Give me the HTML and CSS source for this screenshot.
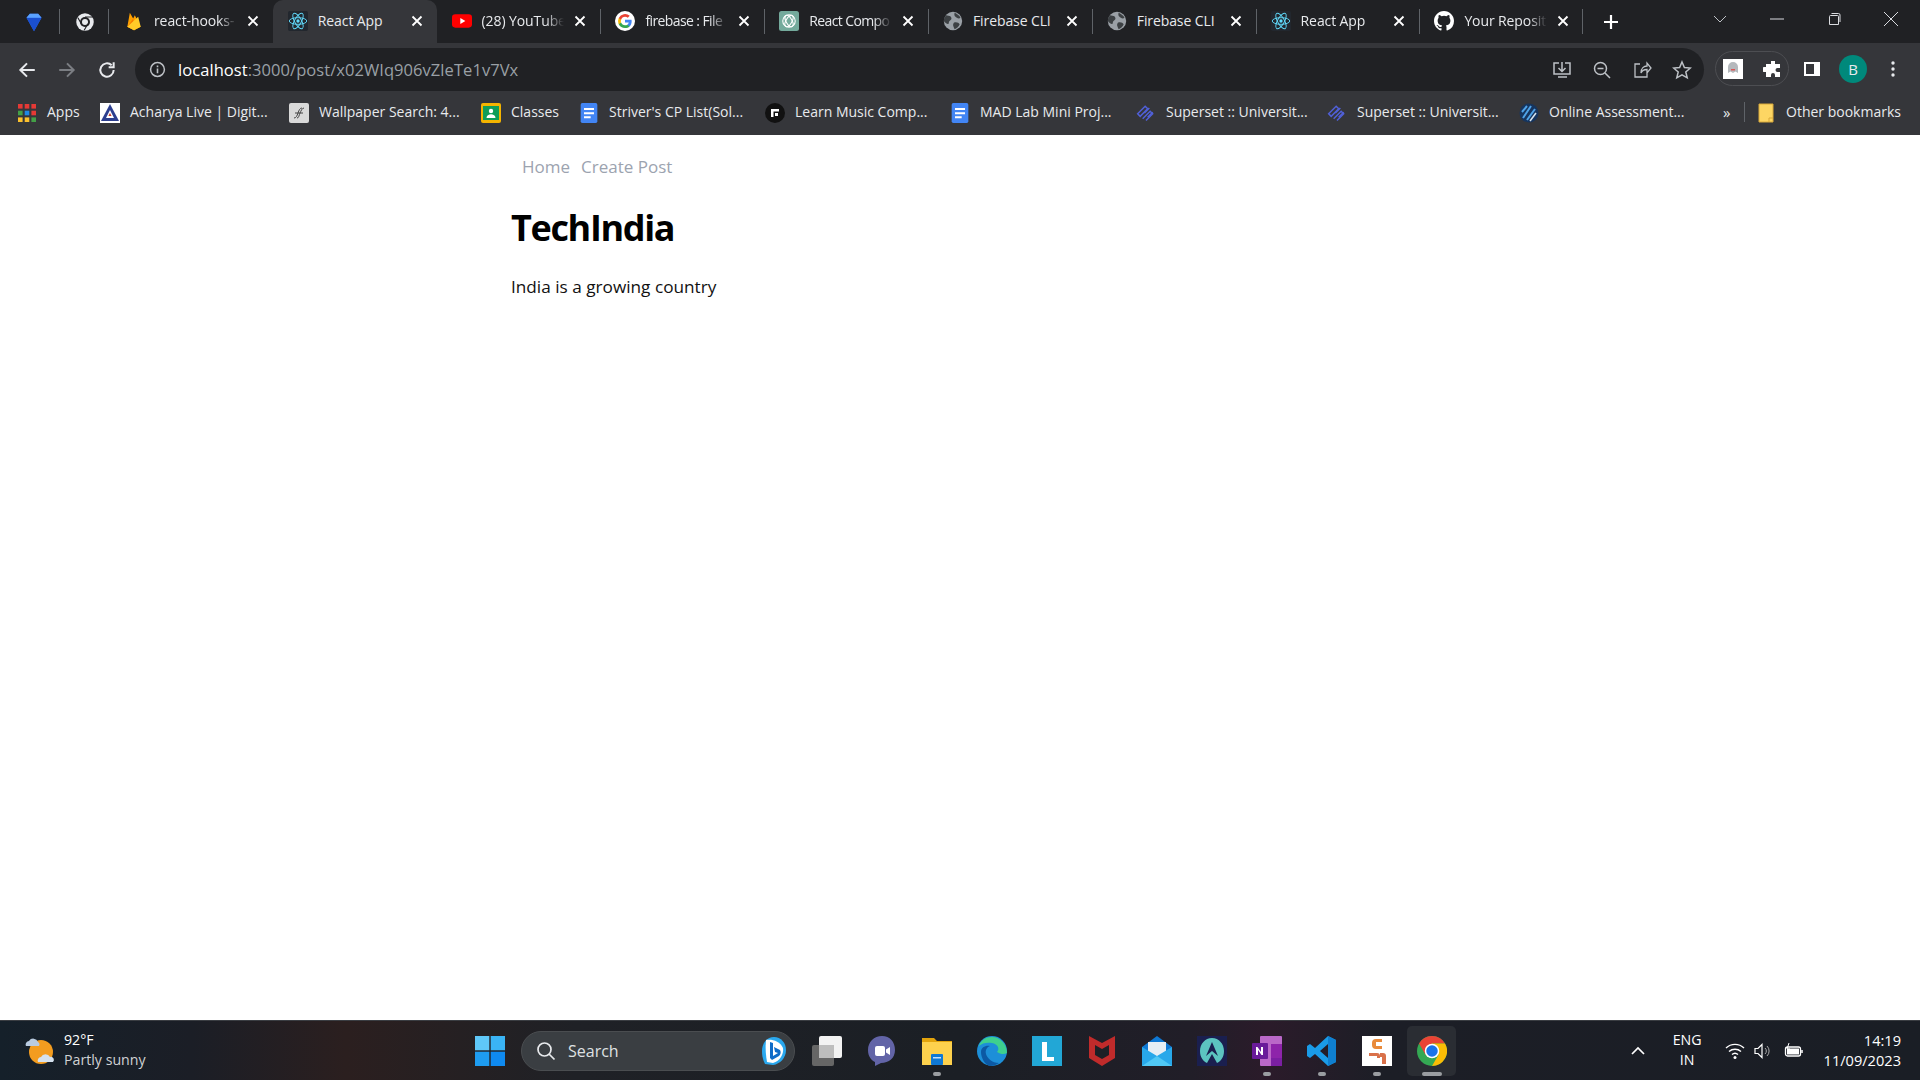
FILE: index.html
```html
<!DOCTYPE html>
<html lang="en">
<head>
<meta charset="utf-8">
<title>React App</title>
<link rel="stylesheet" href="styles.css">
</head>
<body>
<svg class="defs" width="0" height="0" aria-hidden="true">
  <symbol id="react" viewBox="0 0 24 24"><rect width="24" height="24" rx="2" fill="#22272e"/><g fill="none" stroke="#61dafb" stroke-width="1.1"><ellipse cx="12" cy="12" rx="10.5" ry="4"/><ellipse cx="12" cy="12" rx="10.5" ry="4" transform="rotate(60 12 12)"/><ellipse cx="12" cy="12" rx="10.5" ry="4" transform="rotate(120 12 12)"/></g><circle cx="12" cy="12" r="2" fill="#61dafb"/></symbol>
  <symbol id="globe" viewBox="0 0 24 24"><circle cx="12" cy="12" r="11" fill="#9aa0a6"/><path d="M4 5c3 1 5 0 6 3s-3 3-3 6-4 1-6-2c0-3 1-5 3-7zM14 2c2 1 6 3 7 6-2 2-5 0-6-1s-2-3-1-5zM13 14c3-1 6 0 7 2-1 3-4 5-6 6-1-3-3-5-1-8z" fill="#3c4043"/></symbol>
  <symbol id="doc" viewBox="0 0 20 24"><rect width="20" height="24" rx="2" fill="#4285f4"/><path d="M4 6h12v2.4H4zM4 11h12v2.4H4zM4 16h8v2.4H4z" fill="#fff"/></symbol>
  <symbol id="superset" viewBox="0 0 24 24"><g fill="none" stroke="#5060d8" stroke-width="1.8"><path d="M2 13 11 4l3 3-9 9zM8 19l9-9 3 3-8 8"/><path d="M10 12l6-6M14 17l6-6"/></g></symbol>
  <symbol id="close" viewBox="0 0 12 12"><path d="M1.5 1.5l9 9M10.5 1.5l-9 9" stroke="#fff" stroke-width="1.8" fill="none"/></symbol>
</svg>

<header class="chrome">
  <div class="tabstrip">
    <div class="pinned">
      <svg class="fav" viewBox="0 0 24 24"><path d="M3 7l4-5h10l4 5-9 16z" fill="#2a6ae8"/><path d="M3 7h18l-9 16z" fill="#1a4fd0"/><path d="M7 2h10l4 5H3z" fill="#5aa2ff"/></svg>
    </div>
    <div class="pinned">
      <svg class="fav" viewBox="0 0 24 24"><circle cx="12" cy="12" r="10.5" fill="#e8eaed"/><circle cx="12" cy="12" r="6" fill="#202124"/><circle cx="12" cy="12" r="3.6" fill="#e8eaed"/><path d="M12 6h9M8 15 3.500 7M15.500 14 11 22" stroke="#202124" stroke-width="1.300"/></svg>
    </div>
    <div class="tab">
      <svg class="fav" viewBox="0 0 24 24"><path d="M4 19 7 2l4 7 2-4 7 14-8 4z" fill="#ffa000"/><path d="M4 19 11 9l2 14z" fill="#f57c00"/><path d="M4 19 17 7l3 12-8 4z" fill="#ffca28"/></svg>
      <span class="title">react-hooks-</span>
      <svg class="x"><use href="#close"/></svg>
    </div>
    <div class="tab active">
      <svg class="fav"><use href="#react"/></svg>
      <span class="title">React App</span>
      <svg class="x"><use href="#close"/></svg>
    </div>
    <div class="tab">
      <svg class="fav" viewBox="0 0 24 24"><rect y="4" width="24" height="16" rx="4" fill="#f00"/><path d="M10 8.500v7l6-3.500z" fill="#fff"/></svg>
      <span class="title">(28) YouTube</span>
      <svg class="x"><use href="#close"/></svg>
    </div>
    <div class="tab sep">
      <svg class="fav" viewBox="0 0 24 24"><circle cx="12" cy="12" r="12" fill="#fff"/><path d="M20 12.300c0-.6-.1-1.200-.2-1.800H12v3.400h4.500a3.900 3.900 0 0 1-1.700 2.500v2.100h2.700c1.600-1.500 2.500-3.600 2.500-6.200z" fill="#4285f4"/><path d="M12 20.500c2.300 0 4.200-.8 5.500-2l-2.700-2.100c-.7.500-1.700.8-2.800.8-2.200 0-4-1.500-4.700-3.400H4.500v2.100a8.500 8.500 0 0 0 7.500 4.600z" fill="#34a853"/><path d="M7.300 13.800a5 5 0 0 1 0-3.300V8.400H4.500a8.500 8.500 0 0 0 0 7.500z" fill="#fbbc05"/><path d="M12 6.900c1.300 0 2.400.4 3.300 1.300l2.400-2.400A8.500 8.500 0 0 0 4.500 8.400l2.800 2.100C8 8.500 9.800 6.900 12 6.900z" fill="#ea4335"/></svg>
      <span class="title tight">firebase : File</span>
      <svg class="x"><use href="#close"/></svg>
    </div>
    <div class="tab sep">
      <svg class="fav" viewBox="0 0 24 24"><rect width="24" height="24" rx="3" fill="#74aa9c"/><g fill="none" stroke="#fff" stroke-width="1.300"><circle cx="12" cy="12" r="7.500"/><ellipse cx="12" cy="12" rx="7.500" ry="3.500" transform="rotate(60 12 12)"/><ellipse cx="12" cy="12" rx="7.500" ry="3.500" transform="rotate(120 12 12)"/></g></svg>
      <span class="title tight">React Compo</span>
      <svg class="x"><use href="#close"/></svg>
    </div>
    <div class="tab sep">
      <svg class="fav"><use href="#globe"/></svg>
      <span class="title short">Firebase CLI</span>
      <svg class="x"><use href="#close"/></svg>
    </div>
    <div class="tab sep">
      <svg class="fav"><use href="#globe"/></svg>
      <span class="title short">Firebase CLI</span>
      <svg class="x"><use href="#close"/></svg>
    </div>
    <div class="tab sep">
      <svg class="fav"><use href="#react"/></svg>
      <span class="title">React App</span>
      <svg class="x"><use href="#close"/></svg>
    </div>
    <div class="tab sep last">
      <svg class="fav" viewBox="0 0 16 16"><path fill="#fff" d="M8 0C3.580 0 0 3.580 0 8c0 3.540 2.290 6.530 5.470 7.590.4.070.55-.17.550-.38 0-.19-.01-.82-.01-1.490-2.010.37-2.530-.49-2.690-.94-.09-.23-.48-.94-.82-1.130-.28-.15-.68-.52-.01-.53.630-.01 1.080.58 1.230.82.720 1.210 1.870.87 2.330.66.070-.52.280-.87.510-1.070-1.780-.2-3.640-.89-3.640-3.950 0-.87.310-1.590.820-2.150-.08-.2-.36-1.020.08-2.120 0 0 .67-.21 2.200.82a7.420 7.420 0 0 1 4 0c1.530-1.040 2.200-.82 2.200-.82.440 1.100.16 1.920.08 2.120.51.560.82 1.270.82 2.150 0 3.070-1.870 3.750-3.650 3.950.29.250.54.730.54 1.480 0 1.070-.01 1.930-.01 2.200 0 .21.150.46.550.38A8.010 8.010 0 0 0 16 8c0-4.420-3.580-8-8-8z"/></svg>
      <span class="title">Your Reposit</span>
      <svg class="x"><use href="#close"/></svg>
    </div>
    <svg class="plus" viewBox="0 0 16 16"><path d="M8 1v14M1 8h14" stroke="#fff" stroke-width="2.200"/></svg>
    <div class="winctl">
      <svg class="wc" viewBox="0 0 14 14"><path d="M1 4l6 6 6-6" stroke="#bdc1c6" fill="none"/></svg>
      <svg class="wc" viewBox="0 0 14 14"><path d="M0 7h14" stroke="#dadce0"/></svg>
      <svg class="wc" viewBox="0 0 14 14"><path d="M3.500 3.500h7a1 1 0 0 1 1 1v8h-9v-8a1 1 0 0 1 1-1zM4.500 1.500h7a1.500 1.500 0 0 1 1.500 1.500v7" stroke="#dadce0" fill="none"/></svg>
      <svg class="wc" viewBox="0 0 14 14"><path d="M0 0l14 14M14 0 0 14" stroke="#dadce0"/></svg>
    </div>
  </div>

  <div class="toolbar">
    <div class="nav-btns">
      <svg class="tb" viewBox="0 0 18 18"><path d="M16 9H3M9 3 3 9l6 6" stroke="#e8eaed" stroke-width="1.800" fill="none"/></svg>
      <svg class="tb" viewBox="0 0 18 18"><path d="M2 9h13M9 3l6 6-6 6" stroke="#7b7e83" stroke-width="1.800" fill="none"/></svg>
      <svg class="tb" viewBox="0 0 18 18"><path d="M15 9a6 6 0 1 1-1.800-4.300M15 2v4.500h-4.500" stroke="#e8eaed" stroke-width="1.800" fill="none"/></svg>
    </div>
    <div class="omnibox">
      <svg class="info" viewBox="0 0 16 16"><circle cx="8" cy="8" r="6.500" fill="none" stroke="#bdc1c6" stroke-width="1.400"/><path d="M8 7v4.500M8 4.300v1.500" stroke="#bdc1c6" stroke-width="1.500"/></svg>
      <span class="url"><span class="host">localhost</span>:3000/post/x02WIq906vZleTe1v7Vx</span>
      <div class="omni-actions">
        <svg class="tb" viewBox="0 0 20 20"><path d="M7 3H2v11h16V3h-5M10 2v9M6.500 8l3.500 3.500L13.500 8M6 17h9" stroke="#bdc1c6" stroke-width="1.500" fill="none"/></svg>
        <svg class="tb" viewBox="0 0 20 20"><circle cx="8.500" cy="8.500" r="6" stroke="#bdc1c6" stroke-width="1.500" fill="none"/><path d="M13 13l5 5M5.500 8.500h6" stroke="#bdc1c6" stroke-width="1.500"/></svg>
        <svg class="tb" viewBox="0 0 20 20"><path d="M8 4H3v13h12v-4M9 13c0-5 3-7 6-7V3l4 5-4 5V9.500c-3 0-5 1-6 3.500z" stroke="#bdc1c6" stroke-width="1.300" fill="none"/></svg>
        <svg class="tb" viewBox="0 0 20 20"><path d="M10 2l2.400 5.500 6 .5-4.600 4 1.400 5.800L10 14.800l-5.200 3 1.400-5.800L1.600 8l6-.5z" stroke="#bdc1c6" stroke-width="1.500" fill="none"/></svg>
      </div>
    </div>
    <div class="ext-pill">
      <svg class="ext-ghost" viewBox="0 0 20 20"><rect width="20" height="20" fill="#fff"/><path d="M5 14V8a5 5 0 0 1 10 0v6l-2.500-1.500L10 14l-2.500-1.500z" fill="#b5b9bd"/><rect x="8" y="10" width="4" height="1.500" fill="#d55"/></svg>
      <svg class="tb" viewBox="0 0 20 20"><path d="M8 2h4v3h5v4h-2.500a2 2 0 0 0 0 4H17v5h-5v-2a2 2 0 0 0-4 0v2H3v-5H1.500a2.500 2.500 0 0 1 0-5H3V5h5z" fill="#fff"/></svg>
    </div>
    <svg class="tb panel" viewBox="0 0 20 20"><path d="M2 3h16v14H2zM4 5v10h8V5z" fill="#fff" fill-rule="evenodd"/></svg>
    <div class="avatar">B</div>
    <svg class="tb menu" viewBox="0 0 20 20"><circle cx="10" cy="4" r="1.700" fill="#e8eaed"/><circle cx="10" cy="10" r="1.700" fill="#e8eaed"/><circle cx="10" cy="16" r="1.700" fill="#e8eaed"/></svg>
  </div>

  <nav class="bookmarks">
    <div class="bm">
      <svg class="fav" viewBox="0 0 20 20"><g fill="#e53935"><rect x="1" y="1" width="4.600" height="4.600"/><rect x="7.700" y="1" width="4.600" height="4.600"/><rect x="14.400" y="1" width="4.600" height="4.600"/></g><rect x="1" y="7.700" width="4.600" height="4.600" fill="#43a047"/><rect x="7.700" y="7.700" width="4.600" height="4.600" fill="#1e88e5"/><rect x="14.400" y="7.700" width="4.600" height="4.600" fill="#e53935"/><g fill="#fbc02d"><rect x="1" y="14.400" width="4.600" height="4.600"/><rect x="7.700" y="14.400" width="4.600" height="4.600"/></g><rect x="14.400" y="14.400" width="4.600" height="4.600" fill="#43a047"/></svg>
      <span>Apps</span>
    </div>
    <div class="bm">
      <svg class="fav" viewBox="0 0 20 20"><rect width="20" height="20" fill="#fff"/><path d="M10 1 1 18h18z" fill="#2c3e8f"/><path d="M10 7 6 15h8z" fill="#fff"/><path d="M10 10l-1.600 3h3.200z" fill="#c0392b"/></svg>
      <span>Acharya Live | Digit...</span>
    </div>
    <div class="bm">
      <svg class="fav" viewBox="0 0 20 20"><rect width="20" height="20" rx="2" fill="#d9d9d9"/><path d="M5 15c2 0 3-2 4-5s2-5 4-5M8 15c2 0 2-3 3-5s2-5 4-5M6 10h8" stroke="#444" fill="none"/></svg>
      <span>Wallpaper Search: 4...</span>
    </div>
    <div class="bm">
      <svg class="fav" viewBox="0 0 20 20"><rect width="20" height="20" rx="2" fill="#f4b400"/><rect x="2" y="3" width="16" height="14" fill="#0f9d58"/><circle cx="10" cy="8" r="2.200" fill="#fff"/><path d="M5.500 15c0-5 9-5 9 0z" fill="#fff"/></svg>
      <span>Classes</span>
    </div>
    <div class="bm"><svg class="fav"><use href="#doc"/></svg><span>Striver's CP List(Sol...</span></div>
    <div class="bm">
      <svg class="fav" viewBox="0 0 20 20"><circle cx="10" cy="10" r="10" fill="#111"/><path d="M6 6h8v2.500H8.500V14H6zM10 10h3v3h-3z" fill="#fff"/></svg>
      <span>Learn Music Comp...</span>
    </div>
    <div class="bm"><svg class="fav"><use href="#doc"/></svg><span>MAD Lab Mini Proj...</span></div>
    <div class="bm"><svg class="fav"><use href="#superset"/></svg><span>Superset :: Universit...</span></div>
    <div class="bm"><svg class="fav"><use href="#superset"/></svg><span>Superset :: Universit...</span></div>
    <div class="bm">
      <svg class="fav" viewBox="0 0 20 20"><circle cx="10" cy="10" r="9.500" fill="#16355f"/><path d="M4 15 12 3M8 17l8-11M3 9l5-6" stroke="#4fa3e8" stroke-width="2"/><path d="M11 18l6-8" stroke="#d8e4ef" stroke-width="1.500"/></svg>
      <span>Online Assessment...</span>
    </div>
    <span class="more">»</span>
    <div class="bm other">
      <svg class="folder" viewBox="0 0 16 20"><path d="M1 1h14v18H1z" fill="#fdd663" stroke="#d9a93a"/><path d="M11 19v-4h4" fill="none" stroke="#d9a93a"/></svg>
      <span>Other bookmarks</span>
    </div>
  </nav>
</header>

<main class="page">
  <div class="container">
    <ul class="site-nav">
      <li><a href="#">Home</a></li>
      <li><a href="#">Create Post</a></li>
    </ul>
    <h1>TechIndia</h1>
    <p>India is a growing country</p>
  </div>
</main>

<footer class="taskbar">
  <div class="weather">
    <svg class="w-icon" viewBox="0 0 32 32"><circle cx="17" cy="17" r="12" fill="#f39c1f"/><path d="M2 11a3.500 3.500 0 0 1 3-5 5 5 0 0 1 9 1 3 3 0 0 1 1 4z" fill="#b9cbe0"/><path d="M14 27a3.500 3.500 0 0 1 3-5 5 5 0 0 1 9 0 3 3 0 0 1 3 5z" fill="#d5e1ee"/></svg>
    <div class="w-text"><span>92°F</span><span class="dim">Partly sunny</span></div>
  </div>
  <div class="slot">
    <svg class="win" viewBox="0 0 30 30"><rect width="14.300" height="14.300" fill="#5fc8f8"/><rect x="15.700" width="14.300" height="14.300" fill="#3ab4f5"/><rect y="15.700" width="14.300" height="14.300" fill="#1e9cf0"/><rect x="15.700" y="15.700" width="14.300" height="14.300" fill="#0f8af0"/></svg>
  </div>
  <div class="search">
    <svg class="s-icon" viewBox="0 0 20 20"><circle cx="8.500" cy="8.500" r="6.500" fill="none" stroke="#e8eaed" stroke-width="1.700"/><path d="M13 13l5.500 5.500" stroke="#e8eaed" stroke-width="1.700"/></svg>
    <span>Search</span>
    <svg class="bing" viewBox="0 0 26 30"><path d="M13 1c7 0 12 6 12 13 0 8-6 14-13 15l-8-1c-2-4-3-8-3-13C1 7 6 1 13 1z" fill="#2aa8ee"/><path d="M5 4c6-1 14 1 17 8 1 6-3 13-10 15l-6-1c-1-6-2-14-1-22z" fill="#fff"/><path d="M9 6l3 1v13l5-3-3-1-1-5 6 3c1 2 1 4-1 6l-7 4-2-2z" fill="#0f6cc8"/></svg>
  </div>
  <div class="apps">
    <div class="slot"><svg class="app" viewBox="0 0 30 30"><rect y="9" width="22" height="21" rx="2" fill="#666"/><rect x="7" width="23" height="22" rx="2" fill="#f2f2f2"/><rect x="7" y="9" width="15" height="13" fill="#bdbdbd"/></svg></div>
    <div class="slot"><svg class="app" viewBox="0 0 30 30"><path d="M15 0c8 0 13 6 13 14s-6 13-14 13l-6 3v-4C4 24 1 20 1 14 1 6 7 0 15 0z" fill="#6264a7"/><rect x="8" y="10" width="10" height="10" rx="2" fill="#fff"/><path d="M19 13.500l4-2.500v8l-4-2.500z" fill="#fff"/></svg></div>
    <div class="slot">
      <svg class="app" viewBox="0 0 30 30"><path d="M0 2h12l3 3h15v24H0z" fill="#e3a40c"/><rect y="6" width="30" height="23" fill="#fdd14d"/><rect x="9" y="18" width="12" height="11" rx="1" fill="#0f78d4"/><rect x="11" y="21" width="8" height="1.500" fill="#bfe0ff"/></svg>
      <i class="dot"></i>
    </div>
    <div class="slot"><svg class="app" viewBox="0 0 30 30"><circle cx="15" cy="15" r="15" fill="#1d8fd8"/><path d="M30 17c0-9-7-16-15-16S3 6 2 10c3-3 8-4 13-3 6 1 8 6 5 9 3 2 7 3 10 1z" fill="#3ed08e"/><path d="M4 16c0-5 5-7 9-6-3 1-5 4-4 8s6 9 13 9c-3 2-6 3-9 3-5-1-9-8-9-14z" fill="#0c59a4"/></svg></div>
    <div class="slot"><svg class="app" viewBox="0 0 30 30"><rect width="30" height="30" fill="#22a7d6"/><path d="M10 6h5v15h7v4H10z" fill="#fff"/></svg></div>
    <div class="slot"><svg class="app" viewBox="0 0 30 30"><path d="M2 0l13 7 13-7v22L15 30 2 22z" fill="#c02b2b"/><path d="M8 9l7 4 7-4v10l-7 4-7-4z" fill="#1d2026"/></svg></div>
    <div class="slot"><svg class="app" viewBox="0 0 30 30"><path d="M0 11 15 0l15 11v19H0z" fill="#0f78d4"/><path d="M6 6h18v10l-9 5-9-5z" fill="#e6eef5"/><path d="M0 11l15 9 15-9v19H0z" fill="#28a8ea"/><path d="M0 30l15-10 15 10z" fill="#50c8f5"/></svg></div>
    <div class="slot"><svg class="app" viewBox="0 0 30 30"><rect width="30" height="30" fill="#1a1f4f"/><path d="M15 2C8 2 3 8 3 15c0 6 3 10 7 12l5-9 5 9c4-2 7-6 7-12 0-7-5-13-12-13z" fill="#5cc4c0"/><path d="M15 6l-6 14 6-5 6 5z" fill="#1a1f4f"/></svg></div>
    <div class="slot">
      <svg class="app" viewBox="0 0 30 30"><rect x="8" width="22" height="30" rx="1" fill="#ba68c8"/><rect x="19" y="8" width="11" height="14" fill="#8e24aa"/><rect x="19" y="22" width="11" height="8" fill="#7b1fa2"/><rect y="7" width="16" height="16" rx="1" fill="#6a1b9a"/><path d="M4 19v-8h1.500l3.500 5v-5h2v8H9.500L6 14v5z" fill="#fff"/></svg>
      <i class="dot"></i>
    </div>
    <div class="slot">
      <svg class="app" viewBox="0 0 30 30"><path d="M21 0l8 4v22l-8 4L8 18l-5 4-3-2v-10l3-2 5 4zM21 8l-8 7 8 7z" fill="#1a9be8"/><path d="M21 0l8 4v22l-8 4z" fill="#0f7fd0"/></svg>
      <i class="dot"></i>
    </div>
    <div class="slot">
      <svg class="app" viewBox="0 0 30 30"><rect width="30" height="30" fill="#fff"/><path d="M20 3h-6a4 4 0 0 0-4 4v2a4 4 0 0 0 4 4h6v-3h-6V6h6z" fill="#e98a3a"/><path d="M7 17h8a3 3 0 0 1 3 3v2h-3v-2H7zM18 17h3a3 3 0 0 1 3 3v8h-4v-7h-2z" fill="#d9714a"/></svg>
      <i class="dot"></i>
    </div>
    <div class="slot current">
      <svg class="app" viewBox="0 0 24 24"><circle cx="12" cy="12" r="12" fill="#34a853"/><path d="M12 0a12 12 0 0 0-10.400 6l5.200 9L12 6h10.400A12 12 0 0 0 12 0z" fill="#ea4335"/><path d="M22.400 6H12l5.200 9L12 24a12 12 0 0 0 10.400-18z" fill="#fbbc05"/><circle cx="12" cy="12" r="5.800" fill="#fff"/><circle cx="12" cy="12" r="4.600" fill="#1a73e8"/></svg>
      <i class="dot wide"></i>
    </div>
  </div>
  <div class="tray">
    <svg class="chev" viewBox="0 0 14 10"><path d="M1 8l6-6 6 6" stroke="#fff" stroke-width="1.700" fill="none"/></svg>
    <div class="lang"><span>ENG</span><span>IN</span></div>
    <svg class="tray-i" viewBox="0 0 20 20"><path d="M1 7a13 13 0 0 1 18 0M4 10.500a9 9 0 0 1 12 0M7 13.500a4.500 4.500 0 0 1 6 0" stroke="#fff" stroke-width="1.400" fill="none"/><circle cx="10" cy="16.500" r="1.500" fill="#fff"/></svg>
    <svg class="tray-i" viewBox="0 0 20 20"><path d="M2 7.500h3l4-4v13l-4-4H2z" stroke="#fff" stroke-width="1.200" fill="none"/><path d="M12 7a4 4 0 0 1 0 6M14 5a7 7 0 0 1 0 10" stroke="#aaa" fill="none"/></svg>
    <svg class="tray-i batt" viewBox="0 0 20 20"><rect x="1.500" y="6" width="15" height="9" rx="2" stroke="#fff" stroke-width="1.300" fill="none"/><rect x="3" y="7.500" width="12" height="6" fill="#fff"/><path d="M18 9v3" stroke="#fff" stroke-width="1.500"/><path d="M5 2 3 8h3l-1 4" stroke="#fff" fill="none"/></svg>
    <div class="clock"><span>14:19</span><span>11/09/2023</span></div>
  </div>
</footer>
</body>
</html>
```
FILE: styles.css
```css
* { box-sizing: border-box; }
html, body { margin: 0; height: 100%; }
body {
  display: flex;
  flex-direction: column;
  width: 1920px;
  height: 1080px;
  overflow: hidden;
  font-family: "Open Sans", "Noto Sans", sans-serif;
  background: #fff;
}
.defs { position: absolute; }
svg { display: block; flex: none; }

/* Tab strip */
.chrome { flex: none; color: #e8eaed; }
.tabstrip {
  display: flex;
  align-items: stretch;
  height: 43px;
  background: #202124;
}
.pinned {
  width: 49px;
  display: flex;
  align-items: center;
  justify-content: center;
  position: relative;
}
.pinned::after, .tab.sep::before, .tab.last::after {
  content: "";
  position: absolute;
  top: 9px;
  height: 25px;
  width: 1px;
  background: #5f6368;
}
.pinned::after { right: 0; }
.pinned:first-child { width: 60px; padding-left: 8px; }
.tab {
  position: relative;
  width: 163.8px;
  display: flex;
  align-items: center;
  padding: 0 14px 3px 15px;
  gap: 10px;
  font-size: 14px;
  letter-spacing: -.1px;
}
.tab.sep::before { left: 0; }
.tab.last::after { right: 0; }
.tab.active {
  background: #35363a;
  border-radius: 10px 10px 0 0;
}
.fav { width: 20px; height: 20px; }
.tab .fav, .tab .x { margin-top: 2px; }
.title {
  flex: 1;
  min-width: 0;
  white-space: nowrap;
  overflow: hidden;
  -webkit-mask-image: linear-gradient(to right, #000 78%, transparent 100%);
  mask-image: linear-gradient(to right, #000 78%, transparent 100%);
}
.title.tight { letter-spacing: -.6px; }
.active .title, .title.short { -webkit-mask-image: none; mask-image: none; }
.x { width: 12px; height: 12px; }
.plus { width: 16px; height: 16px; align-self: center; margin-left: 20px; }
.winctl {
  margin-left: auto;
  display: flex;
  align-items: center;
  gap: 43px;
  padding: 0 22px 6px 0;
}
.wc { width: 14px; height: 14px; }

/* Toolbar */
.toolbar {
  height: 48px;
  background: #35363a;
  display: flex;
  align-items: flex-end;
  padding-left: 17px;
}
.nav-btns {
  display: flex;
  gap: 20px;
  height: 43px;
  align-items: center;
  width: 118px;
}
.tb { width: 20px; height: 20px; }
.omnibox {
  width: 1569px;
  height: 43px;
  border-radius: 22px;
  background: #202124;
  display: flex;
  align-items: center;
  padding: 0 12px 0 14px;
  font-size: 16.5px;
  letter-spacing: .06px;
  color: #9aa0a6;
}
.info { width: 17px; height: 17px; margin-right: 12px; }
.host { color: #fff; }
.omni-actions { margin-left: auto; display: flex; gap: 20px; }
.ext-pill {
  margin: 0 0 5px 11px;
  width: 74px;
  height: 35px;
  border: 1px solid #4d4e52;
  border-radius: 18px;
  display: flex;
  align-items: center;
  gap: 20px;
  padding-left: 7px;
}
.ext-ghost { width: 20px; height: 20px; }
.panel { margin: 0 0 12px 13px; }
.avatar {
  width: 28px;
  height: 28px;
  border-radius: 50%;
  background: #00897b;
  margin: 0 0 8px 17px;
  font-size: 15px;
  line-height: 28px;
  text-align: center;
}
.menu { margin: 0 0 12px 16px; }

/* Bookmarks */
.bookmarks {
  height: 44px;
  background: #35363a;
  display: grid;
  grid-template-columns: 83px 189px 192px 98px 186px 185px 186px 191px 192px 1fr 21px 176px;
  padding-left: 17px;
  align-items: center;
  font-size: 14px;
}
.bm { display: flex; align-items: center; gap: 10px; white-space: nowrap; min-width: 0; }
.bm span { padding-bottom: 3px; }
.more { font-size: 15px; padding-bottom: 3px; }
.other { position: relative; padding-left: 14px; gap: 12px; }
.other::before {
  content: "";
  position: absolute;
  left: 0;
  top: 0;
  width: 1px;
  height: 20px;
  background: #5f6368;
}
.folder { width: 16px; height: 20px; }

/* Page */
.page { flex: 1; min-height: 0; background: #fff; }
.container { width: 900px; margin: 0 auto; padding-left: 1px; }
.site-nav {
  list-style: none;
  display: flex;
  gap: 11px;
  margin: 0;
  padding: 19px 0 0 11px;
  font-size: 17px;
  line-height: 25px;
}
.site-nav a { color: #9ca3af; text-decoration: none; }
h1 {
  margin: 24px 0 0;
  font-size: 36px;
  line-height: 50px;
  font-weight: 700;
  letter-spacing: -1.35px;
  color: #000;
}
p {
  margin: 21px 0 0;
  font-size: 17.2px;
  line-height: 25px;
  color: #111;
}

/* Taskbar */
.taskbar {
  flex: none;
  height: 60px;
  display: flex;
  align-items: center;
  color: #fff;
  font-size: 14.2px;
  border-top: 1px solid #3a3d42;
  background: linear-gradient(90deg, #15202a 0%, #1b1e26 10%, #2b1f1f 18%, #1f2126 30%, #1b1f25 50%, #211e28 62%, #2b1b2a 66%, #1c1e26 72%, #1a1e25 100%);
}
.weather { width: 462px; display: flex; align-items: center; gap: 8px; padding-left: 24px; }
.w-icon { width: 32px; height: 32px; }
.w-text { display: flex; flex-direction: column; line-height: 20px; margin-top: -2px; }
.dim { color: #d0d2d4; }
.slot {
  position: relative;
  width: 55px;
  height: 50px;
  display: flex;
  align-items: center;
  justify-content: center;
}
.win { width: 30px; height: 30px; }
.search {
  width: 274px;
  height: 40px;
  margin: 0 4px;
  border-radius: 20px;
  background: #3a3e42;
  border: 1px solid #4a4d50;
  display: flex;
  align-items: center;
  gap: 12px;
  padding: 0 7px 0 14px;
  font-size: 16px;
  color: #dfe1e3;
}
.s-icon { width: 20px; height: 20px; }
.bing { width: 26px; height: 30px; margin-left: auto; }
.apps { display: flex; }
.app { width: 30px; height: 30px; }
.dot {
  position: absolute;
  bottom: 0;
  left: 50%;
  width: 8px;
  height: 4px;
  margin-left: -4px;
  border-radius: 2px;
  background: #9a9da1;
}
.dot.wide { width: 20px; margin-left: -10px; }
.current { background: #2a2d33; border-radius: 5px; width: 49px; margin: 0 3px; }
.tray {
  margin-left: auto;
  display: flex;
  align-items: center;
  padding-right: 19px;
}
.chev { width: 14px; height: 10px; margin-right: 28px; }
.lang, .clock { display: flex; flex-direction: column; line-height: 20px; align-items: center; }
.lang { margin-right: 23px; margin-top: -2px; }
.tray-i { width: 20px; height: 20px; margin-right: 8px; }
.batt { margin-left: 3px; }
.clock { align-items: flex-end; margin-left: 12px; margin-top: -2px; font-size: 14.6px; }
```
